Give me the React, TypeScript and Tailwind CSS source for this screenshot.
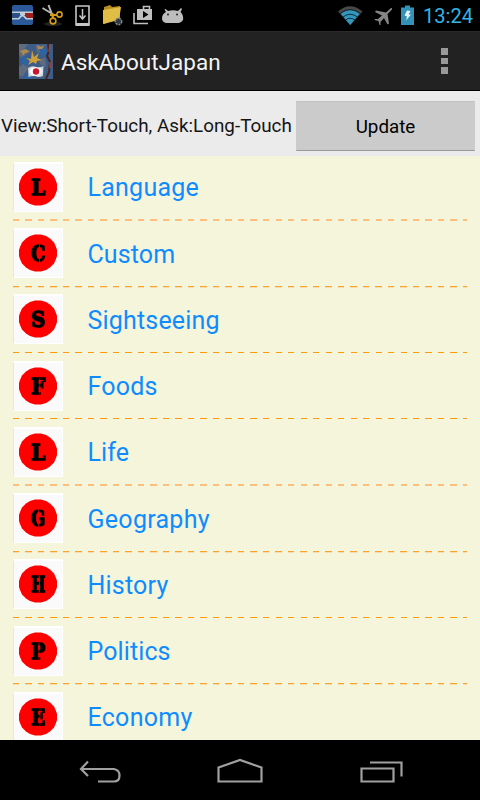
import React from "react";

type Topic = { name: string; letter: string; tracking: string; slit: string; line: string };

const softLine = "h-[2px] bg-[repeating-linear-gradient(90deg,#fcc07c_0_6.25px,transparent_6.25px_12.5px)]";
const sharpLine = "h-px bg-[repeating-linear-gradient(90deg,#ff9a0a_0_6.25px,transparent_6.25px_12.5px)]";
const fadedLine = "h-[2px] bg-[repeating-linear-gradient(90deg,transparent_0_6.25px,#f5f5dc_6.25px_12.5px),linear-gradient(180deg,#f9a52d_50%,#f8dcae_50%)]";

const topics: Topic[] = [
  { name: "Language", letter: "L", tracking: "tracking-[0.25px]", slit: "", line: softLine },
  { name: "Custom", letter: "C", tracking: "tracking-[0.1px]", slit: "M26.5 15V21M26.5 29V34", line: fadedLine },
  { name: "Sightseeing", letter: "S", tracking: "tracking-[0.18px]", slit: "", line: sharpLine },
  { name: "Foods", letter: "F", tracking: "tracking-[0.2px]", slit: "M26.8 17V33", line: sharpLine },
  { name: "Life", letter: "L", tracking: "tracking-[0.1px]", slit: "", line: softLine },
  { name: "Geography", letter: "G", tracking: "tracking-[0.28px]", slit: "M25.5 15V21M25.5 29V34", line: fadedLine },
  { name: "History", letter: "H", tracking: "tracking-[0.2px]", slit: "M26.5 17V33", line: sharpLine },
  { name: "Politics", letter: "P", tracking: "tracking-[0.1px]", slit: "M26 17V33", line: fadedLine },
  { name: "Economy", letter: "E", tracking: "tracking-[0.28px]", slit: "M27 17V33", line: sharpLine },
];

function StatusBar() {
  return (
    <div className="flex h-[31px] shrink-0 bg-black">
      <svg width="190" height="31" viewBox="0 0 190 31">
        {/* 3D glasses */}
        <rect x="12" y="5" width="21" height="20" rx="2" fill="#2c5999" />
        <path d="M12 11.500H33V13H12ZM12 18H18L21 15H24L27 18H33V19.500H26L23 16.500H22L19 19.500H12Z" fill="#c3cdd8" />
        <path d="M12 13H20V15L18 18H12Z" fill="#2b5286" />
        <path d="M20 13H25V15H20Z" fill="#c3cdd8" />
        <path d="M25 13H33V18H27L25 15.500Z" fill="#9d1e1e" />
        {/* Scissors */}
        <ellipse cx="53" cy="24" rx="9" ry="2" fill="#222" />
        <path d="M42.500 8L55 15.500M48.500 5L53 17" stroke="#b5b5b5" strokeWidth="2" />
        <circle cx="59.500" cy="14.500" r="2.600" fill="none" stroke="#d49b16" strokeWidth="1.600" />
        <circle cx="53" cy="21" r="2.900" fill="none" stroke="#d49b16" strokeWidth="1.600" />
        <path d="M50 15L57 15M52 13L53 18" stroke="#d49b16" strokeWidth="1.800" />
        {/* Download document */}
        <path d="M76 6H89V25H76Z" fill="none" stroke="#c6c6c6" strokeWidth="1.600" />
        <path d="M76 24.500H89" stroke="#c6c6c6" strokeWidth="3" />
        <path d="M82.500 9V18M79.500 15.500L82.500 19L85.500 15.500" fill="none" stroke="#c6c6c6" strokeWidth="1.500" />
        {/* Folder */}
        <path d="M104 7L110 5L112 7L120 6V18L104 24Z" fill="#b58c22" />
        <path d="M103 10L121 7L119 20L103 24Z" fill="#e0bd45" />
        <circle cx="118.500" cy="21.500" r="3.200" fill="#31383d" stroke="#7d8990" strokeWidth="1.500" strokeDasharray="2 1" />
        {/* Store */}
        <path d="M143.500 9V6.500H149.500V9" fill="none" stroke="#bfbfbf" strokeWidth="1.600" />
        <path fillRule="evenodd" fill="#bfbfbf" d="M137 9H152V20H137ZM143 11V18L148.500 14.500Z" />
        <path d="M134 13V23.500H148" fill="none" stroke="#bfbfbf" strokeWidth="1.600" />
        {/* Robot head */}
        <path d="M162 18C162 15 164 13 166 12L164.500 9.500L165.500 9L168 11C171 10 175 10 178 11L181 8L182 9L180.500 12C183 14 183.500 18 183 20C181 24 176 23 172.500 23C168 23 162 24 162 18Z" fill="#bdbdbd" />
        <circle cx="168" cy="14.500" r="1" fill="#222" /><circle cx="177" cy="14.500" r="1" fill="#222" />
      </svg>
      <div className="grow" />
      <svg width="150" height="31" viewBox="0 0 150 31">
        <path d="M8 11.500Q20 1 32.500 11.500L20.200 25Z" fill="#484848" />
        <path d="M11 14Q20 6.500 29.500 14L20.200 25Z" fill="#3296bd" />
        <path d="M10 13.500Q20 5.500 30.500 13.500M13 17Q20 11.500 27.500 17M15.500 20Q20 16.500 25 20" fill="none" stroke="#07222e" strokeWidth="0.900" />
        <path d="M61 8L56 12.500L46 10.500L45 12L52 15.500L48 19H45L44.500 20L48.500 21L49.500 25H50.500V22L54 18L57.500 24.500L59 23.500L57.500 14L62 9.500Q62.500 7.500 61 8Z" fill="#858585" />
        <path d="M71 7.500H75V5.500H80V7.500H84V25H71Z" fill="#3292b8" />
        <path d="M77 10.500L80.500 11L78.500 14.500H81L76 20.500L77 16.500L74.500 15.500Z" fill="#e6f4fa" />
        <text x="93" y="23" textLength="50" lengthAdjust="spacingAndGlyphs" fontSize="20.500" className="font-[Roboto,sans-serif]" fill="#33b5e5">13:24</text>
      </svg>
    </div>
  );
}

function AppLogo() {
  return (
    <svg width="34" height="35" viewBox="0 0 34 35" className="shrink-0">
      <defs>
        <radialGradient id="flagShade"><stop offset="60%" stopColor="#fff" /><stop offset="100%" stopColor="#cbd2d2" /></radialGradient>
      </defs>
      <rect width="34" height="35" fill="#3d5c88" />
      <path d="M0 0H9L5 5L10 8L3 14L0 11ZM16 1L25 2L20 6L25 11L18 8ZM0 23L6 19L10 24L3 33L0 31ZM20 17L26 13L27 23L21 20Z" fill="#6f727b" opacity=".7" />
      <path d="M4 11L10 16L8 23L2 18ZM23 3L29 7L26 14L20 10ZM10 27L5 35H13Z" fill="#2d64a2" />
      <path d="M1 7L7 5L11 8L6 9L4 12L3 9ZM18 1L22 3L26 1L23 5L19 5Z" fill="#b08a4c" />
      <path d="M13 6L15 13L20 9L18 14L23 16L18 17L17 20L14 18L9 21L11 17L7 14L12 15Z" fill="#cfa035" />
      <path d="M29 0L30 7L28 12L31 18L30 28L27 35" fill="none" stroke="#49251f" strokeWidth="2" />
      <path d="M31 1L30 8M31 18L31 24" stroke="#b9452a" strokeWidth="1.300" />
      <path d="M9 24Q13 21 17 23Q21 24 24.500 22L24 32Q20 34 16 32Q12 32 9.500 33Z" fill="url(#flagShade)" />
      <circle cx="17" cy="27.500" r="3.200" fill="#c9162f" />
    </svg>
  );
}

function ActionBar() {
  return (
    <div className="flex h-[60px] shrink-0 items-center border-t border-b border-t-[#2b2b2b] border-b-black bg-[#222] pl-[19px] pr-[32px]">
      <AppLogo />
      <h1 className="ml-2 grow whitespace-nowrap pt-[2px] font-[Roboto,sans-serif] text-[22.5px] leading-[30px] text-[#f3f3f3]">AskAboutJapan</h1>
      <div className="flex flex-col gap-[3px]">
        <i className="h-[6.5px] w-[7px] bg-[#999]" />
        <i className="h-[6.5px] w-[7px] bg-[#999]" />
        <i className="h-[6.5px] w-[7px] bg-[#999]" />
      </div>
    </div>
  );
}

function TopicRow({ topic }: { topic: Topic }) {
  return (
    <div className="flex h-[66.25px] shrink-0 flex-col pl-[12.5px] pr-[13px]">
      <div className="flex h-[63.3px] shrink-0 items-start pt-[5.8px]">
        <div className="h-[50px] w-[50px] shrink-0 border border-t-2 border-white border-l-[#e7e7e2] bg-[#fafafa]">
          <svg width="50" height="50" viewBox="0 0 50 50" className="-ml-px -mt-[2px]">
            <path d="M22 6.500H28L33 8L37 10.500L41 14.500L43 19L44 22V28L43 31L41 35.500L37 39.500L33 42L28 43.500H22L17 42L13 39.500L9 35.500L7 31L6 28V22L7 19L9 14.500L13 10.500L17 8Z" fill="#f00" />
            <text x="25" y="32.500" textAnchor="middle" textLength="14" lengthAdjust="spacingAndGlyphs" fontSize="21.500" fontWeight="700" stroke="#000" strokeWidth="1.500" className="font-['DejaVu_Serif',serif]">{topic.letter}</text>
            <path d={topic.slit} stroke="#f00" strokeWidth="0.700" fill="none" />
          </svg>
        </div>
        <span className={`ml-[25px] pt-[10.5px] font-[Roboto,sans-serif] text-[25px] leading-8 text-[#0e8cff] ${topic.tracking}`}>{topic.name}</span>
      </div>
      <div className={`w-full shrink-0 ${topic.line}`} />
    </div>
  );
}

export default function App() {
  return (
    <div className="flex h-[800px] w-[480px] flex-col overflow-hidden bg-black font-[Roboto,sans-serif]">
      <StatusBar />
      <ActionBar />
      <div className="flex h-[65px] shrink-0 items-center justify-between bg-[#ebebeb] pl-px pr-[5px] pt-[5px]">
        <span className="whitespace-nowrap pt-px text-[18.85px] text-[#151515]">View:Short-Touch, Ask:Long-Touch</span>
        <button className="h-[50px] w-[179px] shrink-0 rounded-[1px] border-b border-t border-b-[#999] border-t-[#c2c2c2] bg-[#cbcbcb] pt-[2px] text-[18.8px] text-black">Update</button>
      </div>
      <div className="flex h-[584px] shrink-0 flex-col overflow-hidden bg-[#f5f5dc]">
        {topics.map((topic) => <TopicRow key={topic.name} topic={topic} />)}
      </div>
      <div className="h-[60px] shrink-0 bg-black">
        <svg width="480" height="60" viewBox="0 0 480 60" fill="none" stroke="#a0a0a0" strokeWidth="2.200">
          <path d="M81 29H114Q119.500 30 119.500 35.500Q119.500 41.500 114 41.500H98M88 21.500L81 29L88 36" />
          <path d="M218.500 41.500V27.500L240 20L261.500 27.500V41.500Z" />
          <path d="M361.500 28.500H393.500V41.500H361.500ZM370 22.500H401.500V36.500" />
        </svg>
      </div>
    </div>
  );
}
